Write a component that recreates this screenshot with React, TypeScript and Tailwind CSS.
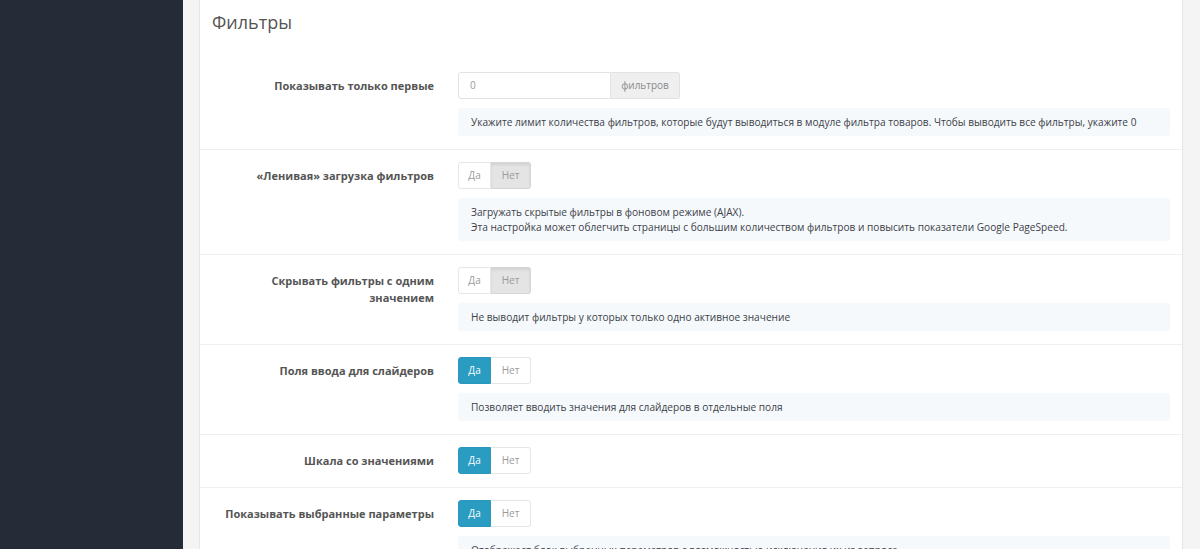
import React from "react";

// Rows of the filter settings form
type Row = {
  label: string[];
  kind: "input" | "switch";
  value?: boolean;
  help?: string[];
};

const ROWS: Row[] = [
  {
    label: ["Показывать только первые"],
    kind: "input",
    help: [
      "Укажите лимит количества фильтров, которые будут выводиться в модуле фильтра товаров. Чтобы выводить все фильтры, укажите 0",
    ],
  },
  {
    label: ["«Ленивая» загрузка фильтров"],
    kind: "switch",
    value: false,
    help: [
      "Загружать скрытые фильтры в фоновом режиме (AJAX).",
      "Эта настройка может облегчить страницы с большим количеством фильтров и повысить показатели Google PageSpeed.",
    ],
  },
  {
    label: ["Скрывать фильтры с одним", "значением"],
    kind: "switch",
    value: false,
    help: ["Не выводит фильтры у которых только одно активное значение"],
  },
  {
    label: ["Поля ввода для слайдеров"],
    kind: "switch",
    value: true,
    help: ["Позволяет вводить значения для слайдеров в отдельные поля"],
  },
  {
    label: ["Шкала со значениями"],
    kind: "switch",
    value: true,
  },
  {
    label: ["Показывать выбранные параметры"],
    kind: "switch",
    value: true,
    help: ["Отображает блок выбранных параметров с возможностью исключения их из запроса"],
  },
];

function Switch({ on }: { on: boolean }) {
  return (
    <div className="flex h-[27px] text-[10px]">
      <span
        className={`flex w-[33px] items-center justify-center rounded-l-[3px] border ${
          on
            ? "border-[#2a97bd] bg-[#2a9bc1] text-white"
            : "border-[#e6e6e6] bg-white text-[#9a9a9a]"
        }`}
      >
        Да
      </span>
      <span
        className={`flex w-[40px] items-center justify-center rounded-r-[3px] border border-l-0 ${
          on
            ? "border-[#e6e6e6] bg-white text-[#9a9a9a]"
            : "border-[#d6d6d6] bg-[#e4e4e4] text-[#9a9a9a] shadow-[inset_0_2px_3px_rgba(0,0,0,0.08)]"
        }`}
      >
        Нет
      </span>
    </div>
  );
}

function LimitInput() {
  return (
    <div className="flex h-[27px] text-[10px]">
      <div className="flex w-[153px] items-center rounded-l-[3px] border border-[#e2e2e2] bg-white pl-[11px] text-[#9a9a9a]">
        0
      </div>
      <div className="flex w-[69px] items-center justify-center rounded-r-[3px] border border-l-0 border-[#e2e2e2] bg-[#efefef] text-[#8a8a8a]">
        фильтров
      </div>
    </div>
  );
}

export default function App() {
  return (
    <div
      className="flex h-[549px] w-[1200px] overflow-hidden bg-[#f4f4f4]"
      style={{ fontFamily: '"Open Sans", "Liberation Sans", sans-serif' }}
    >
      {/* admin sidebar */}
      <div className="w-[183px] shrink-0 bg-[#262c37]" />

      {/* content area */}
      <div className="flex flex-1 pl-[16px] pr-[17px]">
        <div className="flex-1 border-x border-[#e6e6e6] bg-white">
          <h2 className="pl-[12px] pt-[10px] text-[18px] font-normal leading-[24px] text-[#555]">
            Фильтры
          </h2>

          <div className="mt-[26px]">
            {ROWS.map((row, i) => (
              <div
                key={i}
                className={`flex pt-[12px] pb-[13px] ${
                  i < ROWS.length - 1 ? "border-b border-[#f0f0f0]" : ""
                }`}
              >
                <div className="w-[258px] shrink-0 pr-[24px] pt-[5px] text-right text-[11px] font-bold leading-[17px] text-[#555]">
                  {row.label.map((l, j) => (
                    <div key={j}>{l}</div>
                  ))}
                </div>
                <div className="flex-1 pr-[12px]">
                  {row.kind === "input" ? <LimitInput /> : <Switch on={!!row.value} />}
                  {row.help && (
                    <div className="mt-[9px] rounded-[3px] bg-[#f5f9fc] px-[13px] py-[6.5px] text-[10.15px] leading-[15px] text-[#3d4148]">
                      {row.help.map((h, j) => (
                        <div key={j}>{h}</div>
                      ))}
                    </div>
                  )}
                </div>
              </div>
            ))}
          </div>
        </div>
      </div>
    </div>
  );
}
